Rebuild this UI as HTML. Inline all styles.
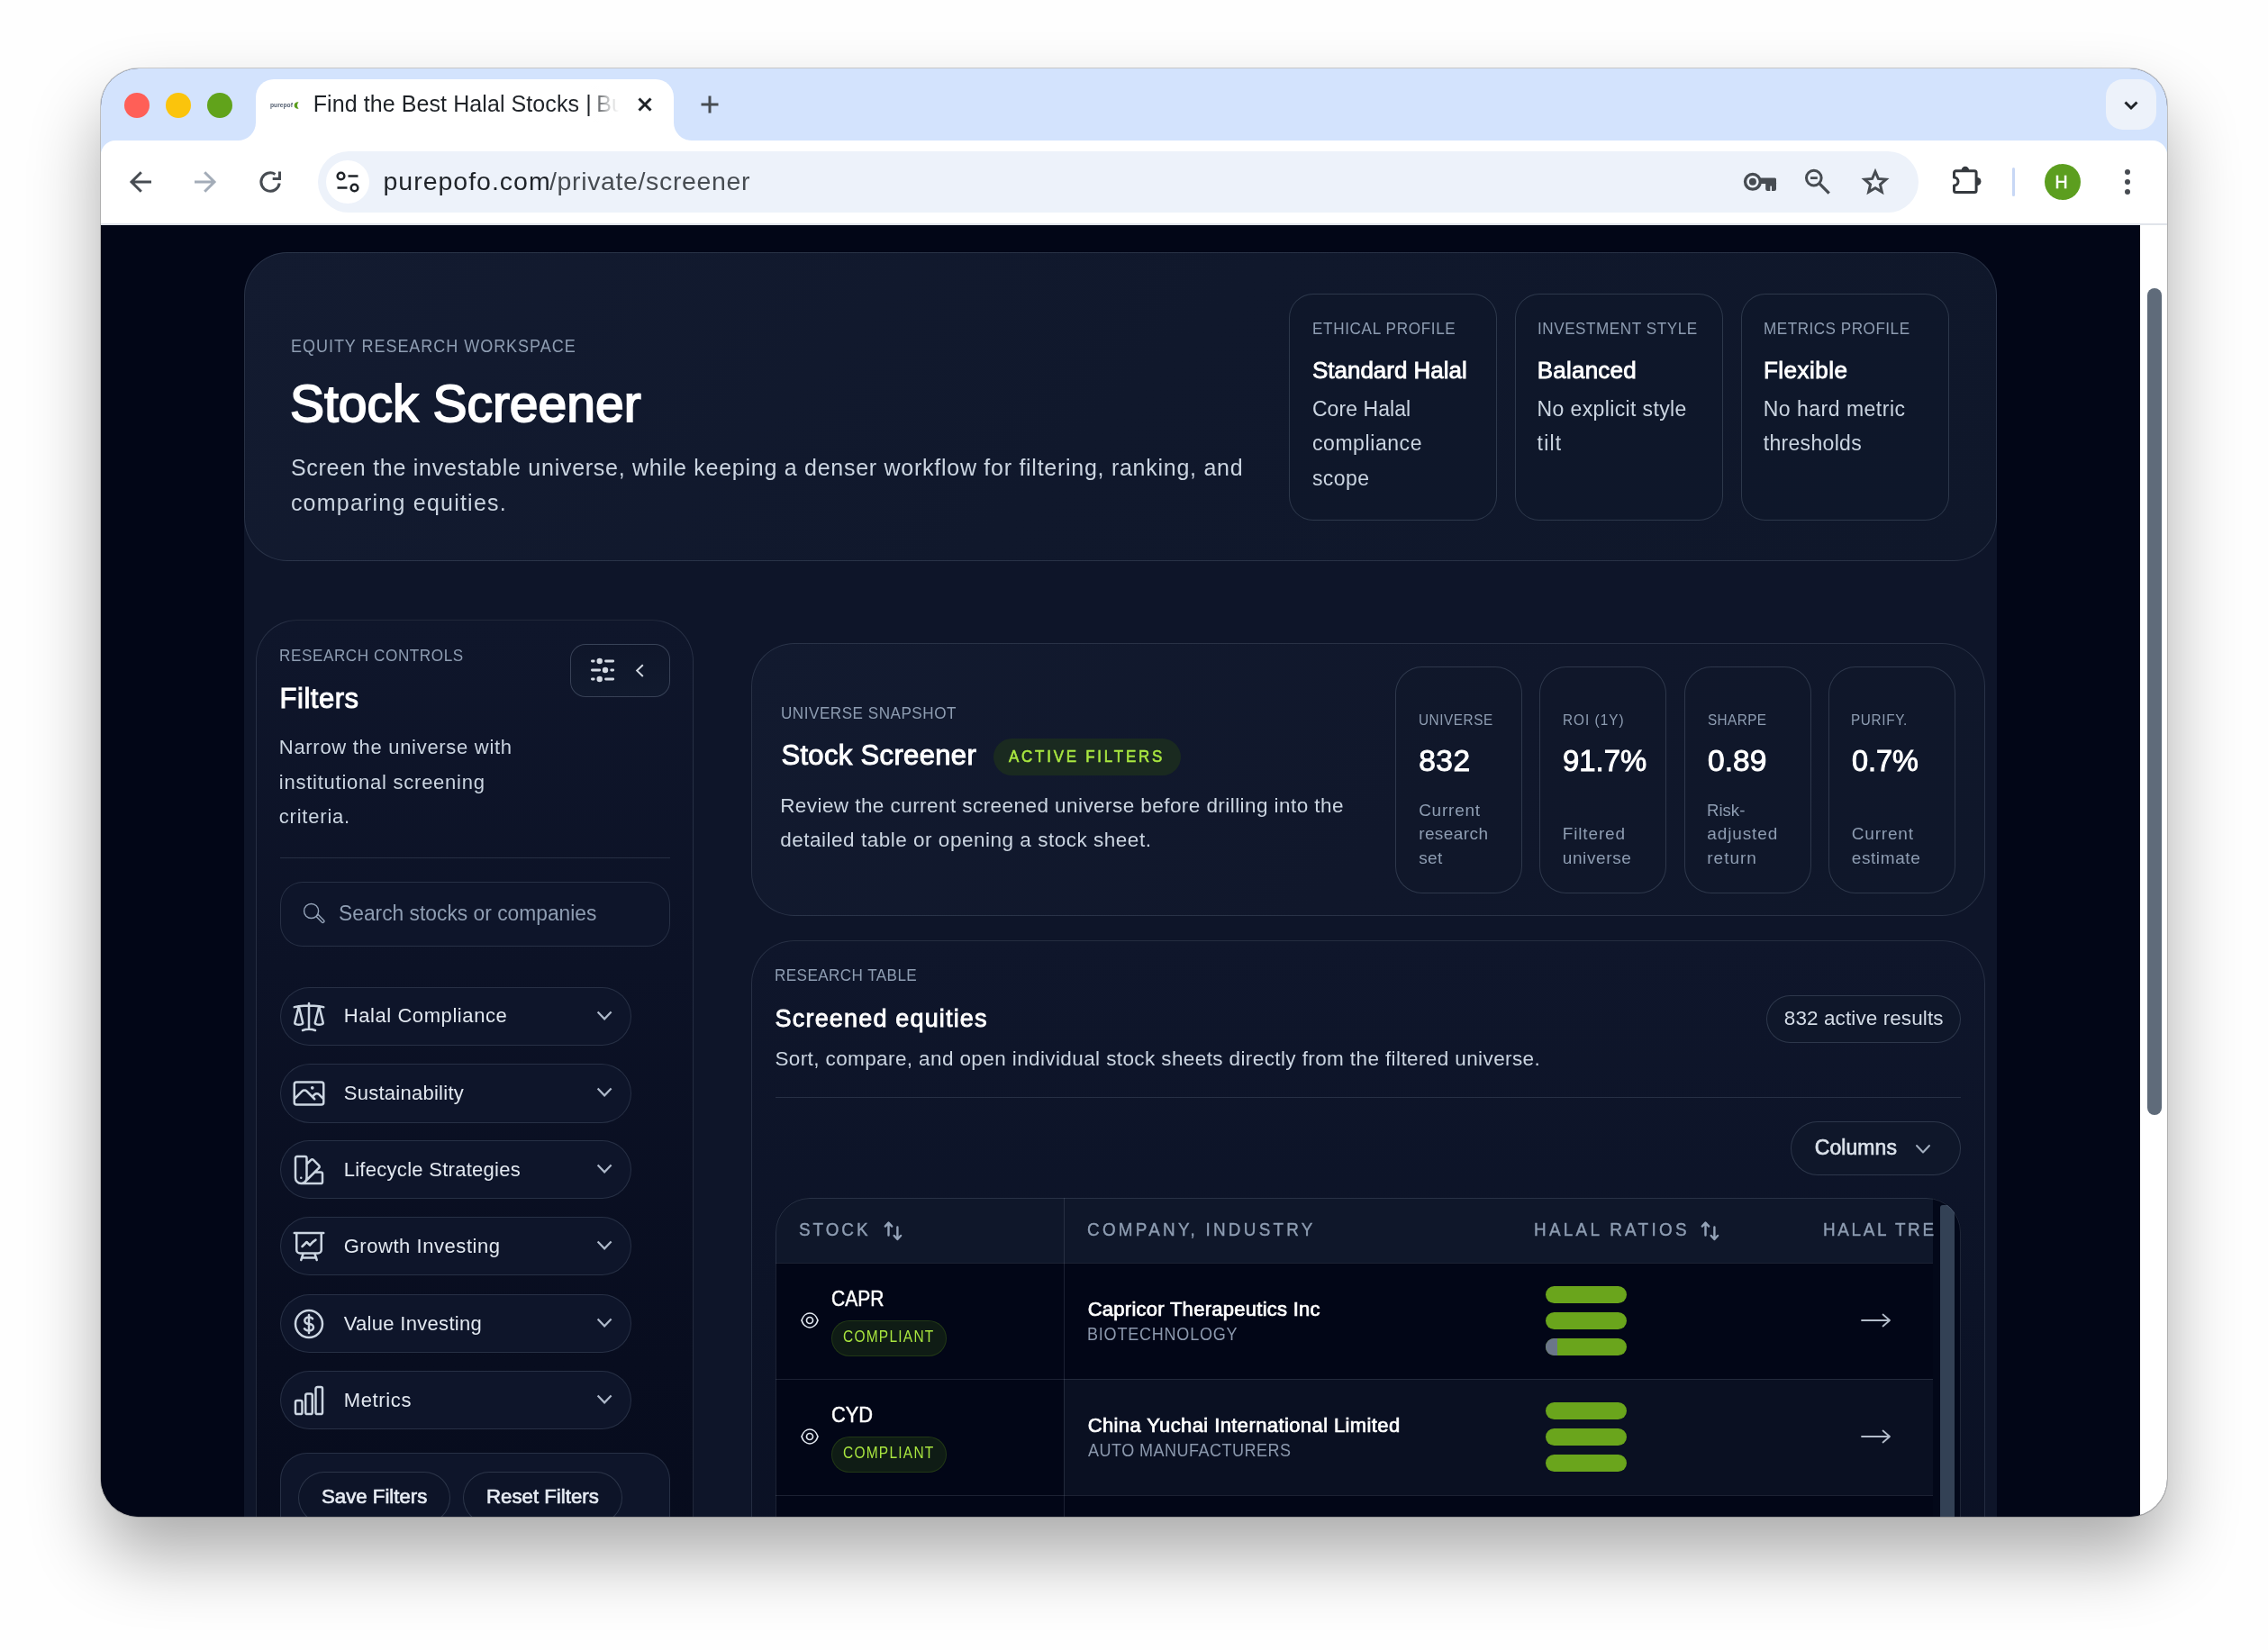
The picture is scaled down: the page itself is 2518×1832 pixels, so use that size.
<!DOCTYPE html>
<html lang="en"><head><meta charset="utf-8"><title>Find the Best Halal Stocks | Stock Screener</title>
<style>

html,body{margin:0;padding:0;}
body{width:2518px;height:1832px;position:relative;overflow:hidden;background:#fefefe;font-family:"Liberation Sans",Arial,sans-serif;}
#txt{position:absolute;left:0;top:0;width:2518px;height:1832px;will-change:transform;}
.t{position:absolute;line-height:1;white-space:nowrap;transform-origin:0 0;}
svg{position:absolute;overflow:visible;}
.ico{fill:none;stroke-linecap:round;stroke-linejoin:round;}
#win{position:absolute;left:112px;top:76px;width:2294px;height:1608px;border-radius:42px;overflow:hidden;background:#020617;}
#shadow{position:absolute;left:112px;top:76px;width:2294px;height:1608px;border-radius:42px;box-shadow:0 0 0 1px rgba(0,0,0,0.18),0 43px 80px rgba(0,0,0,0.33);}

</style></head>
<body>
<div id="shadow"></div>
<div id="win">
<div style="position:absolute;left:0px;top:0px;width:2294px;height:80px;background:#d3e3fd;"></div>
<div style="position:absolute;left:0px;top:80px;width:2294px;height:93px;background:#ffffff;"></div>
<div style="position:absolute;left:0px;top:172px;width:2294px;height:2px;background:#e1e4ea;"></div>
<div style="position:absolute;left:172px;top:12px;width:464px;height:69px;background:#fff;border-radius:20px 20px 0 0;"></div>
<svg style="left:152px;top:60px" width="20" height="20"><path d="M20 0 V20 H0 A20 20 0 0 0 20 0Z" fill="#fff"/></svg>
<svg style="left:636px;top:60px" width="20" height="20"><path d="M0 0 V20 H20 A20 20 0 0 1 0 0Z" fill="#fff"/></svg>
<svg style="left:0px;top:80px" width="16" height="16"><path d="M0 0 H16 A16 16 0 0 0 0 16Z" fill="#d3e3fd"/></svg>
<svg style="left:2278px;top:80px" width="16" height="16"><path d="M16 0 H0 A16 16 0 0 1 16 16Z" fill="#d3e3fd"/></svg>
<div style="position:absolute;left:26px;top:27px;width:28px;height:28px;border-radius:50%;background:#ff5f57;"></div>
<div style="position:absolute;left:72px;top:27px;width:28px;height:28px;border-radius:50%;background:#fbc40c;"></div>
<div style="position:absolute;left:118px;top:27px;width:28px;height:28px;border-radius:50%;background:#61a31b;"></div>
<div style="position:absolute;left:2226px;top:12px;width:56px;height:56px;background:#edf2fa;border-radius:19px;"></div>
<div style="position:absolute;left:241px;top:92px;width:1776.5px;height:68px;background:#edf2fa;border-radius:34px;"></div>
<div style="position:absolute;left:250px;top:102px;width:48px;height:48px;background:#fff;border-radius:50%;"></div>
<div style="position:absolute;left:2158px;top:106px;width:40px;height:40px;background:#5c9e1f;border-radius:50%;"></div>
<div style="position:absolute;left:2122px;top:110px;width:3px;height:32px;background:#c7d7f5;border-radius:2px;"></div>
<div style="position:absolute;left:0px;top:174px;width:2264px;height:1440px;background:#020617;"></div>
<div style="position:absolute;left:2264px;top:174px;width:30px;height:1440px;background:#ffffff;"></div>
<div style="position:absolute;left:2272px;top:244px;width:16px;height:918px;background:#5f6b7a;border-radius:8px;"></div>
<div style="position:absolute;left:159px;top:204px;width:1946px;height:1420px;background:#0e1529;border-radius:48px 48px 0 0;"></div>
<div style="position:absolute;left:159px;top:204px;width:1946px;height:343px;background:linear-gradient(135deg,#131b30 0%,#10182c 50%,#0f172a 100%);border-radius:48px;box-sizing:border-box;border:1px solid rgba(148,163,184,0.19);"></div>
<svg style="left:594.0px;top:30.0px" width="20" height="20" viewBox="0 0 20 20" fill="none" ><path d="M3.5 3.5 L16.5 16.5 M16.5 3.5 L3.5 16.5" stroke="#1f2328" stroke-width="3"/></svg>
<svg style="left:664.0px;top:28.0px" width="24" height="24" viewBox="0 0 24 24" fill="none" ><path d="M12 2.5 V21.5 M2.5 12 H21.5" stroke="#474c52" stroke-width="3"/></svg>
<svg style="left:2244.0px;top:33.5px" width="20" height="14" viewBox="0 0 20 14" fill="none" ><path d="M3.5 3.5 L10 10 L16.5 3.5" stroke="#1f2328" stroke-width="3"/></svg>
<svg style="left:30.0px;top:112.0px" width="28" height="28" viewBox="0 0 28 28" fill="none" ><path d="M26 14 H5 M14.800 3.200 L4 14 L14.800 24.800" stroke="#474c52" stroke-width="3"/></svg>
<svg style="left:102.0px;top:112.0px" width="28" height="28" viewBox="0 0 28 28" fill="none" ><path d="M2 14 H23 M13.200 3.200 L24 14 L13.200 24.800" stroke="#a3acb8" stroke-width="3"/></svg>
<svg style="left:174.0px;top:112.0px" width="28" height="28" viewBox="0 0 28 28" fill="none" ><path d="M24.200 15.500 A10.200 10.200 0 1 1 19.500 5.400" stroke="#474c52" stroke-width="3"/><path d="M24.500 2.400 V10.500 H16.700" stroke="#474c52" stroke-width="3"/></svg>
<svg style="left:260.0px;top:114.0px" width="28" height="24" viewBox="0 0 28 24" fill="none" ><circle cx="6.500" cy="5.500" r="3.800" stroke="#1f2328" stroke-width="2.600"/><path d="M14.500 5.500 H25.500" stroke="#1f2328" stroke-width="2.600"/><circle cx="21.500" cy="18.500" r="3.800" stroke="#1f2328" stroke-width="2.600"/><path d="M2.500 18.500 H13.500" stroke="#1f2328" stroke-width="2.600"/></svg>
<svg style="left:1822px;top:114px" width="40" height="24" viewBox="0 0 40 24" fill="none"><circle cx="11.900" cy="11.800" r="8.400" stroke="#474c52" stroke-width="3.300"/><circle cx="11.900" cy="11.800" r="4" fill="#474c52"/><rect x="19.500" y="7.600" width="18.500" height="6.300" rx="1.500" fill="#474c52"/><rect x="26.200" y="11" width="11.800" height="10.900" rx="2.200" fill="#474c52"/><rect x="31.300" y="16.600" width="1.700" height="6" fill="#edf2fa"/></svg>
<svg style="left:1891px;top:111px" width="30" height="30" viewBox="0 0 30 30" fill="none"><circle cx="10.800" cy="10.600" r="8.350" stroke="#474c52" stroke-width="3"/><path d="M7 10.600 H14.800" stroke="#474c52" stroke-width="2.700"/><path d="M17.300 17.200 L27.700 27.600" stroke="#474c52" stroke-width="3.300"/></svg>
<svg style="left:1952.9px;top:109.7px" width="34" height="34" viewBox="0 0 34 34" fill="none"><path d="M17.00 4.50 L20.35 12.39 L28.89 13.14 L22.42 18.76 L24.35 27.11 L17.00 22.70 L9.65 27.11 L11.58 18.76 L5.11 13.14 L13.65 12.39 Z" stroke="#474c52" stroke-width="3" stroke-linejoin="miter"/></svg>
<svg style="left:2054.0px;top:108.0px" width="34" height="34" viewBox="0 0 34 34" fill="none" ><path d="M3.500 13 V7.700 a2 2 0 0 1 2 -2 H26.100 a2 2 0 0 1 2 2 V27.600 a2 2 0 0 1 -2 2 H5.500 a2 2 0 0 1 -2 -2 V22 A4.500 4.500 0 0 0 3.500 13 Z" stroke="#35393e" stroke-width="3" stroke-linejoin="round"/><path d="M11.700 5 a4.200 4.200 0 0 1 8.400 0 Z" fill="#35393e"/><path d="M29 13 a4.500 4.500 0 0 1 0 9 Z" fill="#35393e"/></svg>
<svg style="left:2246.0px;top:111.0px" width="8" height="30" viewBox="0 0 8 30" fill="none" ><circle cx="4" cy="4" r="3" fill="#474c52"/><circle cx="4" cy="15" r="3" fill="#474c52"/><circle cx="4" cy="26" r="3" fill="#474c52"/></svg>
<svg style="left:213.5px;top:36.5px" width="6" height="8" viewBox="0 0 8 10" fill="none" ><path d="M7.500 0.300 A5 5 0 1 0 7.500 9.700 A6.200 6.200 0 0 1 7.500 0.300Z" fill="#5c9e1f"/></svg>
<div style="position:absolute;left:1319px;top:250px;width:231px;height:252px;box-sizing:border-box;border:1px solid rgba(148,163,184,0.23);border-radius:27px;background:rgba(15,23,42,0.55);"></div>
<div style="position:absolute;left:1570px;top:250px;width:231px;height:252px;box-sizing:border-box;border:1px solid rgba(148,163,184,0.23);border-radius:27px;background:rgba(15,23,42,0.55);"></div>
<div style="position:absolute;left:1821px;top:250px;width:231px;height:252px;box-sizing:border-box;border:1px solid rgba(148,163,184,0.23);border-radius:27px;background:rgba(15,23,42,0.55);"></div>
<div style="position:absolute;left:172px;top:612px;width:486px;height:1100px;box-sizing:border-box;border:1px solid rgba(148,163,184,0.19);border-radius:46px;background:linear-gradient(180deg,#0f162b 0%,#0c1226 35%,#080d1f 75%,#060b1c 100%);"></div>
<div style="position:absolute;left:521px;top:639px;width:111px;height:59px;box-sizing:border-box;border:1px solid rgba(148,163,184,0.30);border-radius:17px;background:linear-gradient(180deg,#0f162a,#111a2e);"></div>
<div style="position:absolute;left:199px;top:876px;width:433px;height:1px;background:rgba(148,163,184,0.19);"></div>
<div style="position:absolute;left:199px;top:903px;width:433px;height:72px;box-sizing:border-box;border:1px solid rgba(148,163,184,0.19);border-radius:25px;background:#0e152a;"></div>
<div style="position:absolute;left:199.2px;top:1020px;width:389.4px;height:65.3px;box-sizing:border-box;border:1px solid rgba(148,163,184,0.19);border-radius:33px;background:#0e152a;"></div>
<div style="position:absolute;left:199.2px;top:1105.3px;width:389.4px;height:65.3px;box-sizing:border-box;border:1px solid rgba(148,163,184,0.19);border-radius:33px;background:#0e152a;"></div>
<div style="position:absolute;left:199.2px;top:1190.2px;width:389.4px;height:65.3px;box-sizing:border-box;border:1px solid rgba(148,163,184,0.19);border-radius:33px;background:#0e152a;"></div>
<div style="position:absolute;left:199.2px;top:1275.2px;width:389.4px;height:65.3px;box-sizing:border-box;border:1px solid rgba(148,163,184,0.19);border-radius:33px;background:#0e152a;"></div>
<div style="position:absolute;left:199.2px;top:1361.2px;width:389.4px;height:65.3px;box-sizing:border-box;border:1px solid rgba(148,163,184,0.19);border-radius:33px;background:#0e152a;"></div>
<div style="position:absolute;left:199.2px;top:1446.2px;width:389.4px;height:65.3px;box-sizing:border-box;border:1px solid rgba(148,163,184,0.19);border-radius:33px;background:#0e152a;"></div>
<div style="position:absolute;left:199px;top:1537px;width:433px;height:140px;box-sizing:border-box;border:1px solid rgba(148,163,184,0.19);border-radius:30px;background:#0e152a;"></div>
<div style="position:absolute;left:219.2px;top:1558px;width:169.3px;height:58px;box-sizing:border-box;border:1px solid rgba(148,163,184,0.23);border-radius:29px;background:#0d1428;"></div>
<div style="position:absolute;left:402.20000000000005px;top:1558px;width:176.4px;height:58px;box-sizing:border-box;border:1px solid rgba(148,163,184,0.23);border-radius:29px;background:#0d1428;"></div>
<svg style="left:544px;top:654px" width="27" height="28" viewBox="0 0 27 28"><g stroke="#d4dae3" stroke-width="2.800" stroke-linecap="round" fill="none"><path d="M1.400 4 H3.200 M16.500 4 H24.700 M1.400 14 H9.700 M22.700 14 H24.700 M1.400 24 H3.200 M16.500 24 H24.700"/></g><g fill="#d4dae3"><circle cx="9.700" cy="4" r="3.200"/><circle cx="16" cy="14" r="3.200"/><circle cx="9.700" cy="24" r="3.200"/></g></svg>
<svg style="left:591px;top:661px" width="14" height="16" viewBox="0 0 14 16" fill="none" stroke="#d4dae3" stroke-width="2"><path d="M10.800 1.300 L4.200 7.600 L10.800 14"/></svg>
<svg style="left:222px;top:924px" width="28" height="28" viewBox="0 0 28 28" fill="none" stroke="#94a3b8" stroke-width="1.400"><circle cx="11.600" cy="11.500" r="8"/><path d="M17 17.600 L19.200 15.400 L25.600 21.900 A1.300 1.300 0 0 1 25.600 23.700 L25.200 24.100 A1.300 1.300 0 0 1 23.400 24.100 Z" stroke-linejoin="round"/></svg>
<svg class="ico" style="left:211.2px;top:1032.9px" width="40" height="40" viewBox="0 0 24 24" stroke="#cbd5e1" stroke-width="1.5"><path d="M12 3v17.25m0 0c-1.472 0-2.882.265-4.185.75M12 20.25c1.472 0 2.882.265 4.185.75M18.75 4.97A48.416 48.416 0 0 0 12 4.5c-2.291 0-4.545.16-6.75.47m13.5 0c1.01.143 2.01.317 3 .52m-3-.52 2.62 10.726c.122.499-.106 1.028-.589 1.202a5.988 5.988 0 0 1-2.031.352 5.988 5.988 0 0 1-2.031-.352c-.483-.174-.711-.703-.59-1.202L18.75 4.971Zm-16.5.52c.99-.203 1.99-.377 3-.52m0 0 2.62 10.726c.122.499-.106 1.028-.589 1.202a5.989 5.989 0 0 1-2.031.352 5.989 5.989 0 0 1-2.031-.352c-.483-.174-.711-.703-.59-1.202L5.25 4.971Z"/></svg>
<svg style="left:550px;top:1045.0px" width="18" height="13" viewBox="0 0 18 13" fill="none" stroke="#aeb9ca" stroke-width="2.200"><path d="M1.600 2.400 L9.100 10.300 L16.600 2.400"/></svg>
<svg class="ico" style="left:211.2px;top:1118.2px" width="40" height="40" viewBox="0 0 24 24" stroke="#cbd5e1" stroke-width="1.5"><path d="m2.25 15.75 5.159-5.159a2.25 2.25 0 0 1 3.182 0l5.159 5.159m-1.500-1.500 1.409-1.409a2.25 2.25 0 0 1 3.182 0l2.909 2.909m-18 3.750h16.500a1.500 1.500 0 0 0 1.500-1.500V6a1.500 1.500 0 0 0-1.500-1.500H3.750A1.500 1.500 0 0 0 2.250 6v12a1.500 1.500 0 0 0 1.500 1.500Zm10.500-11.250h.008v.008h-.008V8.250Zm.375 0a.375.375 0 1 1-.750 0 .375.375 0 0 1 .750 0Z"/></svg>
<svg style="left:550px;top:1130.3px" width="18" height="13" viewBox="0 0 18 13" fill="none" stroke="#aeb9ca" stroke-width="2.200"><path d="M1.600 2.400 L9.100 10.300 L16.600 2.400"/></svg>
<svg class="ico" style="left:211.2px;top:1203.1px" width="40" height="40" viewBox="0 0 24 24" stroke="#cbd5e1" stroke-width="1.5"><path d="M4.098 19.902a3.750 3.750 0 0 0 5.304 0l6.401-6.402M6.750 21A3.750 3.750 0 0 1 3 17.250V4.125C3 3.504 3.504 3 4.125 3h5.250c.621 0 1.125.504 1.125 1.125v4.072M6.750 21a3.750 3.750 0 0 0 3.750-3.750V8.197M6.750 21h13.125c.621 0 1.125-.504 1.125-1.125v-5.250c0-.621-.504-1.125-1.125-1.125h-4.072M10.500 8.197l2.880-2.880c.438-.439 1.150-.439 1.590 0l3.712 3.713c.440.440.440 1.152 0 1.590l-2.879 2.880M6.750 17.250h.008v.008H6.750v-.008Z"/></svg>
<svg style="left:550px;top:1215.2px" width="18" height="13" viewBox="0 0 18 13" fill="none" stroke="#aeb9ca" stroke-width="2.200"><path d="M1.600 2.400 L9.100 10.300 L16.600 2.400"/></svg>
<svg class="ico" style="left:211.2px;top:1288.1px" width="40" height="40" viewBox="0 0 24 24" stroke="#cbd5e1" stroke-width="1.5"><path d="M3.750 3v11.250A2.250 2.250 0 0 0 6 16.500h2.250M3.750 3h-1.500m1.500 0h16.500m0 0h1.500m-1.500 0v11.250A2.250 2.250 0 0 1 18 16.500h-2.250m-7.500 0h7.500m-7.500 0-1 3m8.500-3 1 3m0 0 .500 1.500m-.500-1.500h-9.500m0 0-.500 1.500m.750-9 3-3 2.148 2.148A12.061 12.061 0 0 1 16.500 7.605"/></svg>
<svg style="left:550px;top:1300.2px" width="18" height="13" viewBox="0 0 18 13" fill="none" stroke="#aeb9ca" stroke-width="2.200"><path d="M1.600 2.400 L9.100 10.300 L16.600 2.400"/></svg>
<svg class="ico" style="left:211.2px;top:1374.1px" width="40" height="40" viewBox="0 0 24 24" stroke="#cbd5e1" stroke-width="1.5"><path d="M12 6v12m-3-2.818.879.659c1.171.879 3.070.879 4.242 0 1.172-.879 1.172-2.303 0-3.182C13.536 12.219 12.768 12 12 12c-.725 0-1.450-.220-2.003-.659-1.106-.879-1.106-2.303 0-3.182s2.900-.879 4.006 0l.415.330M21 12a9 9 0 1 1-18 0 9 9 0 0 1 18 0Z"/></svg>
<svg style="left:550px;top:1386.2px" width="18" height="13" viewBox="0 0 18 13" fill="none" stroke="#aeb9ca" stroke-width="2.200"><path d="M1.600 2.400 L9.100 10.300 L16.600 2.400"/></svg>
<svg class="ico" style="left:211.2px;top:1459.1px" width="40" height="40" viewBox="0 0 24 24" stroke="#cbd5e1" stroke-width="1.5"><path d="M3 13.125C3 12.504 3.504 12 4.125 12h2.250c.621 0 1.125.504 1.125 1.125v6.750C7.500 20.496 6.996 21 6.375 21h-2.250A1.125 1.125 0 0 1 3 19.875v-6.750ZM9.750 8.625c0-.621.504-1.125 1.125-1.125h2.250c.621 0 1.125.504 1.125 1.125v11.250c0 .621-.504 1.125-1.125 1.125h-2.250a1.125 1.125 0 0 1-1.125-1.125V8.625ZM16.500 4.125c0-.621.504-1.125 1.125-1.125h2.250C20.496 3 21 3.504 21 4.125v15.750c0 .621-.504 1.125-1.125 1.125h-2.250a1.125 1.125 0 0 1-1.125-1.125V4.125Z"/></svg>
<svg style="left:550px;top:1471.2px" width="18" height="13" viewBox="0 0 18 13" fill="none" stroke="#aeb9ca" stroke-width="2.200"><path d="M1.600 2.400 L9.100 10.300 L16.600 2.400"/></svg>
<div style="position:absolute;left:722px;top:638px;width:1370px;height:303px;box-sizing:border-box;border:1px solid rgba(148,163,184,0.19);border-radius:48px;background:linear-gradient(135deg,#121a2f 0%,#10172b 55%,#0f172a 100%);"></div>
<div style="position:absolute;left:1436.7px;top:664px;width:141px;height:251.5px;box-sizing:border-box;border:1px solid rgba(148,163,184,0.23);border-radius:30px;background:rgba(15,23,42,0.5);"></div>
<div style="position:absolute;left:1597.2px;top:664px;width:141px;height:251.5px;box-sizing:border-box;border:1px solid rgba(148,163,184,0.23);border-radius:30px;background:rgba(15,23,42,0.5);"></div>
<div style="position:absolute;left:1758.1px;top:664px;width:141px;height:251.5px;box-sizing:border-box;border:1px solid rgba(148,163,184,0.23);border-radius:30px;background:rgba(15,23,42,0.5);"></div>
<div style="position:absolute;left:1918px;top:664px;width:141px;height:251.5px;box-sizing:border-box;border:1px solid rgba(148,163,184,0.23);border-radius:30px;background:rgba(15,23,42,0.5);"></div>
<div style="position:absolute;left:990.9000000000001px;top:743.6px;width:207.8px;height:41.4px;border-radius:21px;background:#1a2a20;"></div>
<div style="position:absolute;left:722px;top:968px;width:1370px;height:800px;box-sizing:border-box;border:1px solid rgba(148,163,184,0.19);border-radius:48px;background:linear-gradient(180deg,#0f162b 0%,#0c1327 50%,#0a1023 100%);"></div>
<div style="position:absolute;left:749px;top:1142px;width:1316px;height:1px;background:rgba(148,163,184,0.19);"></div>
<div style="position:absolute;left:1849.2px;top:1029px;width:215.7px;height:53px;box-sizing:border-box;border:1px solid rgba(148,163,184,0.23);border-radius:27px;background:#0f172a;"></div>
<div style="position:absolute;left:1876.1px;top:1169px;width:188.8px;height:59.6px;box-sizing:border-box;border:1px solid rgba(148,163,184,0.23);border-radius:30px;background:#0f172a;"></div>
<svg class="ico" style="left:2014px;top:1194px" width="18" height="12" viewBox="0 0 18 12" stroke="#a3afc0" stroke-width="2"><path d="M2 2 L9 9.5 L16 2"/></svg>
<div style="position:absolute;left:749px;top:1254.4px;width:1316px;height:500px;border-radius:38px 38px 0 0;overflow:hidden;background:#020617;"><div style="position:absolute;left:0;top:0;width:1316px;height:72px;background:#0f172a;"></div><div style="position:absolute;left:0;top:72px;width:1316px;height:129px;background:#020617;"></div><div style="position:absolute;left:0;top:201px;width:320px;height:129px;background:#020617;"></div><div style="position:absolute;left:320px;top:201px;width:996px;height:129px;background:#0a1022;"></div><div style="position:absolute;left:0;top:330px;width:1316px;height:200px;background:#020617;"></div><div style="position:absolute;left:0;top:72px;width:1285px;height:1px;background:rgba(148,163,184,0.18);"></div><div style="position:absolute;left:0;top:201px;width:1285px;height:1px;background:rgba(148,163,184,0.18);"></div><div style="position:absolute;left:0;top:330px;width:1285px;height:1px;background:rgba(148,163,184,0.18);"></div><div style="position:absolute;left:320px;top:0;width:1px;height:500px;background:rgba(148,163,184,0.18);"></div><div style="position:absolute;left:1285px;top:0;width:31px;height:500px;background:#030819;"></div><div style="position:absolute;left:1293px;top:7.500px;width:16.300px;height:500px;background:#334155;border-radius:3px;"></div></div>
<div style="position:absolute;left:749px;top:1254.4px;width:1316px;height:500px;box-sizing:border-box;border:1px solid rgba(148,163,184,0.19);border-radius:38px 38px 0 0;"></div>
<svg style="left:870px;top:1279px" width="20" height="24" viewBox="0 0 20 24" fill="none" stroke="#94a3b8" stroke-width="2.400" stroke-linecap="round" stroke-linejoin="round"><path d="M4.500 16.500 V3 M0.800 6.600 L4.500 2.600 L8.200 6.600 M14.400 7.500 V20.600 M10.700 17 L14.400 21 L18.100 17"/></svg>
<svg style="left:1777px;top:1279px" width="20" height="24" viewBox="0 0 20 24" fill="none" stroke="#94a3b8" stroke-width="2.400" stroke-linecap="round" stroke-linejoin="round"><path d="M4.500 16.500 V3 M0.800 6.600 L4.500 2.600 L8.200 6.600 M14.400 7.500 V20.600 M10.700 17 L14.400 21 L18.100 17"/></svg>
<svg style="left:777.2px;top:1380.8px" width="20" height="18" viewBox="0 0 20 18" fill="none" stroke="#e2e8f0" stroke-width="1.700"><path d="M1 9 C2.400 4.400 6 1 10 1 C14 1 17.600 4.400 19 9 C17.600 13.600 14 17 10 17 C6 17 2.400 13.600 1 9 Z"/><circle cx="10" cy="9" r="3.500"/></svg>
<div style="position:absolute;left:811.2px;top:1390.1px;width:127.4px;height:40.2px;box-sizing:border-box;border:1px solid rgba(132,204,22,0.16);border-radius:20.100px;background:rgba(101,163,13,0.14);"></div>
<div style="position:absolute;left:1604px;top:1352px;width:90px;height:19px;border-radius:10px;background:#6aa51c;overflow:hidden;"></div>
<div style="position:absolute;left:1604px;top:1381px;width:90px;height:19px;border-radius:10px;background:#6aa51c;overflow:hidden;"></div>
<div style="position:absolute;left:1604px;top:1410px;width:90px;height:19px;border-radius:10px;background:#6aa51c;overflow:hidden;"><div style="width:13px;height:19px;background:#6b7689;"></div></div>
<svg class="ico" style="left:1954px;top:1380px" width="34" height="20" viewBox="0 0 34 20" stroke="#b4bdcb" stroke-width="1.800"><path d="M1 10 H32 M24.500 3.500 L32 10 L24.500 16.500"/></svg>
<svg style="left:777.2px;top:1509.8px" width="20" height="18" viewBox="0 0 20 18" fill="none" stroke="#e2e8f0" stroke-width="1.700"><path d="M1 9 C2.400 4.400 6 1 10 1 C14 1 17.600 4.400 19 9 C17.600 13.600 14 17 10 17 C6 17 2.400 13.600 1 9 Z"/><circle cx="10" cy="9" r="3.500"/></svg>
<div style="position:absolute;left:811.2px;top:1519.1px;width:127.4px;height:40.2px;box-sizing:border-box;border:1px solid rgba(132,204,22,0.16);border-radius:20.100px;background:rgba(101,163,13,0.14);"></div>
<div style="position:absolute;left:1604px;top:1481px;width:90px;height:19px;border-radius:10px;background:#6aa51c;overflow:hidden;"></div>
<div style="position:absolute;left:1604px;top:1510px;width:90px;height:19px;border-radius:10px;background:#6aa51c;overflow:hidden;"></div>
<div style="position:absolute;left:1604px;top:1539px;width:90px;height:19px;border-radius:10px;background:#6aa51c;overflow:hidden;"></div>
<svg class="ico" style="left:1954px;top:1509px" width="34" height="20" viewBox="0 0 34 20" stroke="#b4bdcb" stroke-width="1.800"><path d="M1 10 H32 M24.500 3.500 L32 10 L24.500 16.500"/></svg>
</div>
<!-- text layer -->
<div id="txt">
<span class="t" style="left:299.56px;top:112.78px;font-size:8px;color:#566172;font-weight:700;transform:scaleX(0.8371);">purepof</span>
<span class="t" style="left:347.75px;top:103.09px;font-size:25px;color:#1f2328;letter-spacing:0.083px;">Find the Best Halal Stocks |</span>
<span class="t" style="left:662.25px;top:103.09px;font-size:25px;color:#1f2328;">Bu</span>
<span class="t" style="left:425.48px;top:187.12px;font-size:28.5px;color:#1f2328;letter-spacing:0.993px;">purepofo.com</span>
<span class="t" style="left:610.00px;top:187.12px;font-size:28.5px;color:#474c52;letter-spacing:0.637px;">/private/screener</span>
<span class="t" style="left:2281.50px;top:192.64px;font-size:19.5px;color:#ffffff;-webkit-text-stroke:0.6px #ffffff;">H</span>
<span class="t" style="left:322.92px;top:374.12px;font-size:20px;color:#8e9db2;letter-spacing:1.077px;transform:scaleX(0.9000);">EQUITY RESEARCH WORKSPACE</span>
<span class="t" style="left:322.35px;top:419.58px;font-size:57.5px;color:#ffffff;-webkit-text-stroke:1.84px #ffffff;transform:scaleX(0.9912);">Stock Screener</span>
<span class="t" style="left:322.88px;top:507.09px;font-size:25px;color:#cbd5e1;letter-spacing:0.732px;">Screen the investable universe, while keeping a denser workflow for filtering, ranking, and</span>
<span class="t" style="left:322.88px;top:545.89px;font-size:25px;color:#cbd5e1;letter-spacing:1.224px;">comparing equities.</span>
<span class="t" style="left:1456.70px;top:355.27px;font-size:19px;color:#8e9db2;letter-spacing:0.732px;transform:scaleX(0.9000);">ETHICAL PROFILE</span>
<span class="t" style="left:1457.35px;top:397.54px;font-size:26px;color:#ffffff;-webkit-text-stroke:0.83px #ffffff;transform:scaleX(0.9987);">Standard Halal</span>
<span class="t" style="left:1456.93px;top:442.88px;font-size:23px;color:#cbd5e1;letter-spacing:0.062px;">Core Halal</span>
<span class="t" style="left:1456.93px;top:481.48px;font-size:23px;color:#cbd5e1;letter-spacing:0.582px;">compliance</span>
<span class="t" style="left:1456.93px;top:520.08px;font-size:23px;color:#cbd5e1;letter-spacing:0.446px;">scope</span>
<span class="t" style="left:1706.93px;top:355.27px;font-size:19px;color:#8e9db2;letter-spacing:0.613px;transform:scaleX(0.9000);">INVESTMENT STYLE</span>
<span class="t" style="left:1706.78px;top:397.54px;font-size:26px;color:#ffffff;-webkit-text-stroke:0.83px #ffffff;letter-spacing:0.221px;">Balanced</span>
<span class="t" style="left:1706.61px;top:442.88px;font-size:23px;color:#cbd5e1;letter-spacing:0.370px;">No explicit style</span>
<span class="t" style="left:1706.61px;top:481.48px;font-size:23px;color:#cbd5e1;letter-spacing:1.167px;">tilt</span>
<span class="t" style="left:1958.20px;top:355.27px;font-size:19px;color:#8e9db2;letter-spacing:0.569px;transform:scaleX(0.9000);">METRICS PROFILE</span>
<span class="t" style="left:1957.88px;top:397.54px;font-size:26px;color:#ffffff;-webkit-text-stroke:0.83px #ffffff;letter-spacing:0.494px;">Flexible</span>
<span class="t" style="left:1957.71px;top:442.88px;font-size:23px;color:#cbd5e1;letter-spacing:0.497px;">No hard metric</span>
<span class="t" style="left:1957.71px;top:481.48px;font-size:23px;color:#cbd5e1;letter-spacing:0.316px;">thresholds</span>
<span class="t" style="left:309.80px;top:718.17px;font-size:19px;color:#8e9db2;letter-spacing:0.653px;transform:scaleX(0.9000);">RESEARCH CONTROLS</span>
<span class="t" style="left:310.55px;top:760.11px;font-size:31px;color:#ffffff;-webkit-text-stroke:0.99px #ffffff;letter-spacing:0.513px;">Filters</span>
<span class="t" style="left:309.80px;top:818.53px;font-size:22px;color:#cbd5e1;letter-spacing:0.701px;">Narrow the universe with</span>
<span class="t" style="left:309.80px;top:857.63px;font-size:22px;color:#cbd5e1;letter-spacing:0.755px;">institutional screening</span>
<span class="t" style="left:309.80px;top:895.83px;font-size:22px;color:#cbd5e1;letter-spacing:0.787px;">criteria.</span>
<span class="t" style="left:375.67px;top:1002.98px;font-size:23px;color:#8e9db2;transform:scaleX(0.9915);">Search stocks or companies</span>
<span class="t" style="left:381.70px;top:1117.33px;font-size:22px;color:#e2e8f0;letter-spacing:0.577px;">Halal Compliance</span>
<span class="t" style="left:381.70px;top:1202.63px;font-size:22px;color:#e2e8f0;letter-spacing:0.269px;">Sustainability</span>
<span class="t" style="left:381.70px;top:1287.53px;font-size:22px;color:#e2e8f0;letter-spacing:0.281px;">Lifecycle Strategies</span>
<span class="t" style="left:381.70px;top:1372.53px;font-size:22px;color:#e2e8f0;letter-spacing:0.549px;">Growth Investing</span>
<span class="t" style="left:381.70px;top:1458.53px;font-size:22px;color:#e2e8f0;letter-spacing:0.306px;">Value Investing</span>
<span class="t" style="left:381.70px;top:1543.53px;font-size:22px;color:#e2e8f0;letter-spacing:0.651px;">Metrics</span>
<span class="t" style="left:357.23px;top:1651.00px;font-size:22.5px;color:#e6ebf3;-webkit-text-stroke:0.67px #e6ebf3;transform:scaleX(0.9877);">Save Filters</span>
<span class="t" style="left:539.81px;top:1651.00px;font-size:22.5px;color:#e6ebf3;-webkit-text-stroke:0.67px #e6ebf3;transform:scaleX(0.9880);">Reset Filters</span>
<span class="t" style="left:867.28px;top:782.27px;font-size:19px;color:#8e9db2;letter-spacing:0.567px;transform:scaleX(0.9000);">UNIVERSE SNAPSHOT</span>
<span class="t" style="left:867.40px;top:823.31px;font-size:31px;color:#ffffff;-webkit-text-stroke:0.99px #ffffff;letter-spacing:0.343px;">Stock Screener</span>
<span class="t" style="left:1120.32px;top:831.44px;font-size:18.8px;color:#aae840;-webkit-text-stroke:0.56px #aae840;letter-spacing:3.095px;transform:scaleX(0.9000);">ACTIVE FILTERS</span>
<span class="t" style="left:866.15px;top:883.50px;font-size:22.5px;color:#cbd5e1;letter-spacing:0.438px;">Review the current screened universe before drilling into the</span>
<span class="t" style="left:866.15px;top:921.80px;font-size:22.5px;color:#cbd5e1;letter-spacing:0.519px;">detailed table or opening a stock sheet.</span>
<span class="t" style="left:1574.92px;top:790.62px;font-size:17.4px;color:#8e9db2;letter-spacing:0.633px;transform:scaleX(0.8800);">UNIVERSE</span>
<span class="t" style="left:1575.13px;top:828.39px;font-size:33.5px;color:#ffffff;-webkit-text-stroke:0.94px #ffffff;letter-spacing:0.537px;">832</span>
<span class="t" style="left:1575.13px;top:890.37px;font-size:19px;color:#8e9db2;letter-spacing:0.773px;">Current</span>
<span class="t" style="left:1575.13px;top:916.47px;font-size:19px;color:#8e9db2;letter-spacing:0.424px;">research</span>
<span class="t" style="left:1575.13px;top:942.57px;font-size:19px;color:#8e9db2;letter-spacing:0.351px;">set</span>
<span class="t" style="left:1735.04px;top:790.62px;font-size:17.4px;color:#8e9db2;letter-spacing:1.157px;transform:scaleX(0.8800);">ROI (1Y)</span>
<span class="t" style="left:1735.22px;top:828.39px;font-size:33.5px;color:#ffffff;-webkit-text-stroke:0.94px #ffffff;transform:scaleX(0.9808);">91.7%</span>
<span class="t" style="left:1734.74px;top:916.47px;font-size:19px;color:#8e9db2;letter-spacing:0.860px;">Filtered</span>
<span class="t" style="left:1734.74px;top:942.57px;font-size:19px;color:#8e9db2;letter-spacing:0.607px;">universe</span>
<span class="t" style="left:1896.11px;top:790.62px;font-size:17.4px;color:#8e9db2;letter-spacing:0.458px;transform:scaleX(0.8800);">SHARPE</span>
<span class="t" style="left:1895.96px;top:828.39px;font-size:33.5px;color:#ffffff;-webkit-text-stroke:0.94px #ffffff;letter-spacing:0.114px;">0.89</span>
<span class="t" style="left:1895.28px;top:890.37px;font-size:19px;color:#8e9db2;transform:scaleX(0.9783);">Risk-</span>
<span class="t" style="left:1895.24px;top:916.47px;font-size:19px;color:#8e9db2;letter-spacing:0.882px;">adjusted</span>
<span class="t" style="left:1895.24px;top:942.57px;font-size:19px;color:#8e9db2;letter-spacing:1.010px;">return</span>
<span class="t" style="left:2055.44px;top:790.62px;font-size:17.4px;color:#8e9db2;letter-spacing:0.746px;transform:scaleX(0.8800);">PURIFY.</span>
<span class="t" style="left:2055.89px;top:828.39px;font-size:33.5px;color:#ffffff;-webkit-text-stroke:0.94px #ffffff;transform:scaleX(0.9677);">0.7%</span>
<span class="t" style="left:2055.73px;top:916.47px;font-size:19px;color:#8e9db2;letter-spacing:0.823px;">Current</span>
<span class="t" style="left:2055.73px;top:942.57px;font-size:19px;color:#8e9db2;letter-spacing:0.603px;">estimate</span>
<span class="t" style="left:860.20px;top:1073.27px;font-size:19px;color:#8e9db2;letter-spacing:0.459px;transform:scaleX(0.9000);">RESEARCH TABLE</span>
<span class="t" style="left:860.62px;top:1118.39px;font-size:27px;color:#ffffff;-webkit-text-stroke:0.86px #ffffff;letter-spacing:1.173px;">Screened equities</span>
<span class="t" style="left:860.39px;top:1164.60px;font-size:22.5px;color:#cbd5e1;letter-spacing:0.394px;">Sort, compare, and open individual stock sheets directly from the filtered universe.</span>
<span class="t" style="left:1980.83px;top:1120.30px;font-size:22.5px;color:#d3dbe6;letter-spacing:0.093px;">832 active results</span>
<span class="t" style="left:2014.83px;top:1263.08px;font-size:23px;color:#dce3ec;-webkit-text-stroke:0.6px #dce3ec;letter-spacing:0.056px;">Columns</span>
<span class="t" style="left:887.24px;top:1355.30px;font-size:20.5px;color:#8e9db2;-webkit-text-stroke:0.41px #8e9db2;letter-spacing:3.225px;transform:scaleX(0.9200);">STOCK</span>
<span class="t" style="left:1207.13px;top:1355.30px;font-size:20.5px;color:#8e9db2;-webkit-text-stroke:0.41px #8e9db2;letter-spacing:3.555px;transform:scaleX(0.9200);">COMPANY, INDUSTRY</span>
<span class="t" style="left:1703.34px;top:1355.30px;font-size:20.5px;color:#8e9db2;-webkit-text-stroke:0.41px #8e9db2;letter-spacing:3.599px;transform:scaleX(0.9200);">HALAL RATIOS</span>
<span class="t" style="left:2023.54px;top:1355.30px;font-size:20.5px;color:#8e9db2;-webkit-text-stroke:0.41px #8e9db2;letter-spacing:2.893px;transform:scaleX(0.9200);">HALAL TRE</span>
<span class="t" style="left:922.94px;top:1430.03px;font-size:24px;color:#ffffff;-webkit-text-stroke:0.48px #ffffff;transform:scaleX(0.8745);">CAPR</span>
<span class="t" style="left:936.11px;top:1476.35px;font-size:17.6px;color:#a9e63f;letter-spacing:1.421px;transform:scaleX(0.8800);">COMPLIANT</span>
<span class="t" style="left:1207.63px;top:1442.53px;font-size:22px;color:#ffffff;-webkit-text-stroke:0.7px #ffffff;letter-spacing:0.271px;">Capricor Therapeutics Inc</span>
<span class="t" style="left:1206.92px;top:1471.63px;font-size:19.4px;color:#8b98ad;letter-spacing:0.829px;transform:scaleX(0.9300);">BIOTECHNOLOGY</span>
<span class="t" style="left:922.90px;top:1559.03px;font-size:24px;color:#ffffff;-webkit-text-stroke:0.48px #ffffff;transform:scaleX(0.9104);">CYD</span>
<span class="t" style="left:936.11px;top:1605.35px;font-size:17.6px;color:#a9e63f;letter-spacing:1.421px;transform:scaleX(0.8800);">COMPLIANT</span>
<span class="t" style="left:1207.63px;top:1571.53px;font-size:22px;color:#ffffff;-webkit-text-stroke:0.7px #ffffff;letter-spacing:0.398px;">China Yuchai International Limited</span>
<span class="t" style="left:1208.36px;top:1600.63px;font-size:19.4px;color:#8b98ad;letter-spacing:0.504px;transform:scaleX(0.9300);">AUTO MANUFACTURERS</span>
</div>
<div style="position:absolute;left:656px;top:96px;width:40px;height:40px;background:linear-gradient(90deg,rgba(255,255,255,0) 0%,rgba(255,255,255,0.7) 45%,#fff 78%);"></div>
</body></html>
